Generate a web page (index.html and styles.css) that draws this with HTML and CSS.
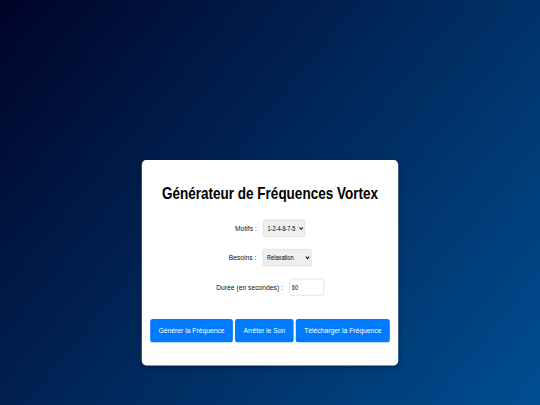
FILE: index.html
```html
<!DOCTYPE html>
<html lang="fr">
<head>
<meta charset="utf-8">
<title>Générateur de Fréquences Vortex</title>
<link rel="stylesheet" href="styles.css">
</head>
<body>
<div class="stage">
  <div class="viewport">
    <div class="card">
      <h1 class="title">Générateur de Fréquences Vortex</h1>
      <div class="field">
        <label class="field-label" for="motifs">Motifs :</label>
        <select class="control select select-motifs" id="motifs">
          <option>1-2-4-8-7-5</option>
        </select>
      </div>
      <div class="field">
        <label class="field-label" for="besoins">Besoins :</label>
        <select class="control select select-besoins" id="besoins">
          <option>Relaxation</option>
        </select>
      </div>
      <div class="field field-last">
        <label class="field-label" for="duree">Durée (en secondes) :</label>
        <input class="control input" id="duree" type="text" value="60">
      </div>
      <div class="actions">
        <button class="btn" type="button">Générer la Fréquence</button>
        <button class="btn" type="button">Arrêter le Son</button>
        <button class="btn" type="button">Télécharger la Fréquence</button>
      </div>
    </div>
  </div>
</div>
</body>
</html>
```

FILE: styles.css
```css
html, body {
  margin: 0;
  padding: 0;
  width: 540px;
  height: 405px;
  overflow: hidden;
  background: #02173f;
}

.stage {
  width: 540px;
  height: 405px;
  overflow: hidden;
  contain: strict;
}

.viewport {
  width: 1280px;
  height: 800px;
  box-sizing: border-box;
  padding-top: 316px;
  display: flex;
  justify-content: center;
  align-items: flex-start;
  background: linear-gradient(135deg, #000428 0%, #004e92 100%);
  transform: scale(0.421875, 0.50625);
  transform-origin: 0 0;
  font-family: "Liberation Sans", Arial, sans-serif;
}

.card {
  background: #ffffff;
  border-radius: 10px;
  padding: 20px;
  box-shadow: 0 4px 12px rgba(0, 0, 0, 0.3);
  text-align: center;
}

.title {
  margin: 29px 0 32px;
  font-size: 32px;
  line-height: 37px;
  font-weight: bold;
  color: #000000;
}

.field {
  display: flex;
  justify-content: center;
  align-items: center;
  gap: 15px;
  height: 34px;
  margin-bottom: 24px;
}

.field-last {
  margin-bottom: 46px;
}

.field-label {
  font-size: 16px;
  color: #111111;
}

.control {
  font-family: "Liberation Sans", Arial, sans-serif;
  font-size: 13.33px;
  color: #000000;
  box-sizing: border-box;
  border: 1px solid #cccccc;
  border-radius: 4px;
  height: 34px;
}

.select {
  background-color: #efefef;
  padding: 0 0 0 5px;
}

.select-motifs {
  width: 99px;
}

.select-besoins {
  width: 115px;
}

.input {
  width: 82px;
  height: 33px;
  padding: 8px 5px;
  background: #ffffff;
}

.actions {
  display: flex;
  gap: 5px;
  margin-bottom: 26px;
}

.btn {
  font-family: "Liberation Sans", Arial, sans-serif;
  font-size: 16px;
  line-height: 18px;
  white-space: nowrap;
  color: #ffffff;
  background: #007bff;
  border: none;
  border-radius: 5px;
  padding: 14px 20px;
  margin: 0;
}
```
